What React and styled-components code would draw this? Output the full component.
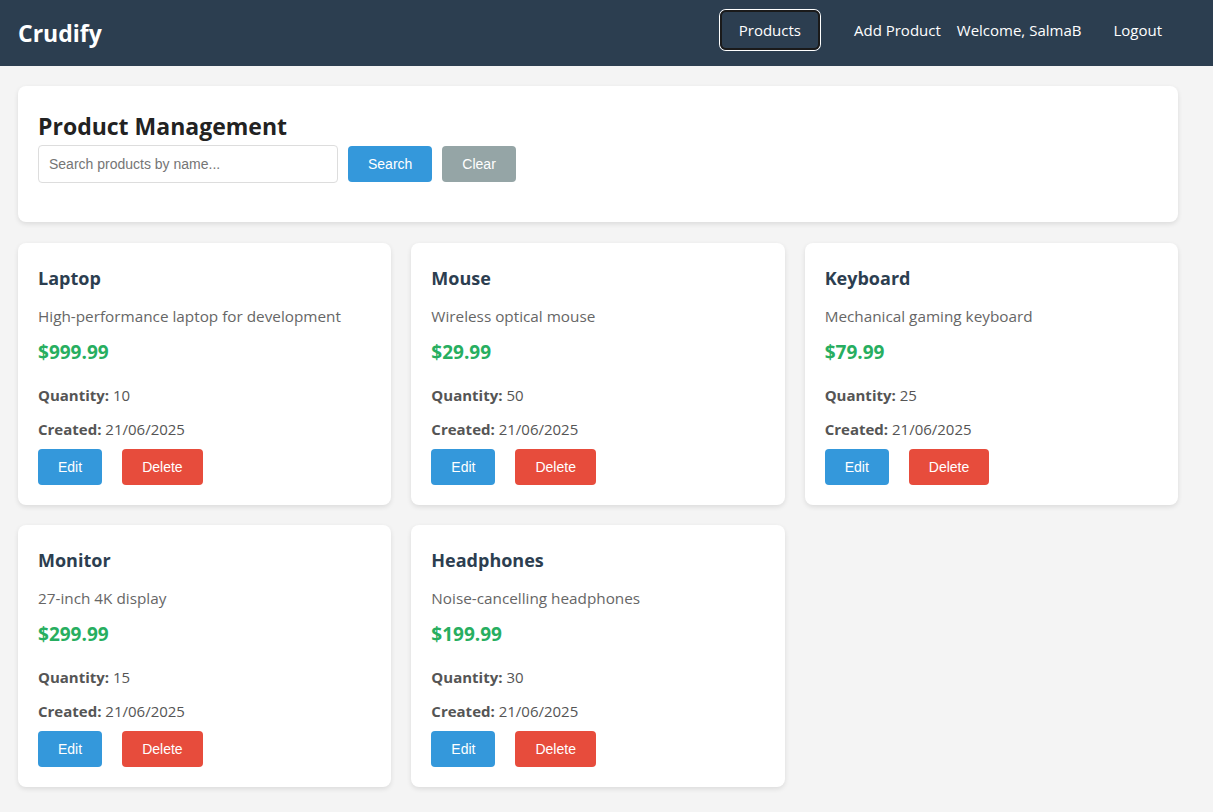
import styled, { createGlobalStyle } from "styled-components";

const GlobalStyle = createGlobalStyle`
  * {
    box-sizing: border-box;
  }
  body {
    margin: 0;
    background: #f4f4f4;
    font-family: "Segoe UI", "Open Sans", "Noto Sans", sans-serif;
    color: #333;
  }
`;

const Navbar = styled.nav`
  height: 66px;
  background: #2c3e50;
  display: flex;
  align-items: center;
  justify-content: space-between;
  padding: 0 35px 0 18px;
`;

const Logo = styled.div`
  color: #fff;
  font-size: 23px;
  font-weight: 700;
`;

const NavLinks = styled.div`
  display: flex;
  align-items: center;
  margin-bottom: 6px;
`;

const NavLink = styled.a`
  color: #fff;
  font-size: 15px;
  text-decoration: none;
  padding: 8px 16px;
  cursor: pointer;
  ${(p) =>
    p.$active &&
    `
    margin-right: 18px;
    padding: 0 17px;
    height: 40px;
    display: flex;
    align-items: center;
    border: 2px solid #1a1a1a;
    border-radius: 6px;
    box-shadow: 0 0 0 1px #fff;
  `}
`;

const Welcome = styled.span`
  color: #fff;
  font-size: 15px;
`;

const LogoutButton = styled.button`
  margin-left: 16px;
  background: transparent;
  border: none;
  color: #fff;
  font-family: inherit;
  font-size: 15px;
  padding: 8px 16px;
  cursor: pointer;
`;

const Container = styled.main`
  width: 1160px;
  margin-left: 18px;
  padding: 20px 0;
  display: flex;
  flex-direction: column;
  gap: 21px;
`;

const Panel = styled.section`
  background: #fff;
  border-radius: 8px;
  box-shadow: 0 2px 5px rgba(0, 0, 0, 0.1);
  padding: 20px 20px 39px;
`;

const PageTitle = styled.h1`
  margin: 0 0 4px;
  padding-top: 5px;
  font-size: 23px;
  line-height: 30px;
  font-weight: 700;
  color: #222;
`;

const SearchRow = styled.form`
  display: flex;
  align-items: center;
  gap: 10px;
`;

const SearchInput = styled.input`
  width: 300px;
  height: 38px;
  padding: 0 10px;
  border: 1px solid #ddd;
  border-radius: 4px;
  font-family: "Liberation Sans", Arial, sans-serif;
  font-size: 14px;
  color: #333;
  &::placeholder {
    color: #757575;
  }
`;

const Button = styled.button`
  height: 36px;
  padding: 0 20px;
  border: none;
  border-radius: 4px;
  background: ${(p) => p.$bg};
  color: #fff;
  font-family: "Liberation Sans", Arial, sans-serif;
  font-size: 14px;
  cursor: pointer;
`;

const Grid = styled.div`
  display: grid;
  grid-template-columns: repeat(3, 1fr);
  gap: 20px;
`;

const Card = styled.article`
  background: #fff;
  border-radius: 8px;
  box-shadow: 0 2px 5px rgba(0, 0, 0, 0.1);
  padding: 20px;
  height: 262px;
  display: flex;
  flex-direction: column;
`;

const CardTitle = styled.h3`
  margin: 0;
  padding-top: 3px;
  font-size: 18px;
  line-height: 24px;
  font-weight: 700;
  color: #2c3e50;
`;

const Description = styled.p`
  margin: 16px 0 0;
  font-size: 15.3px;
  line-height: 20px;
  color: #666;
`;

const Price = styled.div`
  margin-top: 14px;
  font-size: 19px;
  line-height: 25px;
  font-weight: 700;
  color: #27ae60;
`;

const Meta = styled.p`
  margin: ${(p) => p.$top}px 0 0;
  font-size: 15px;
  line-height: 20px;
  color: #555;
  & > strong {
    font-weight: 700;
  }
`;

const Actions = styled.div`
  margin-top: 10px;
  display: flex;
  gap: 20px;
`;

const products = [
  { name: "Laptop", description: "High-performance laptop for development", price: 999.99, quantity: 10 },
  { name: "Mouse", description: "Wireless optical mouse", price: 29.99, quantity: 50 },
  { name: "Keyboard", description: "Mechanical gaming keyboard", price: 79.99, quantity: 25 },
  { name: "Monitor", description: "27-inch 4K display", price: 299.99, quantity: 15 },
  { name: "Headphones", description: "Noise-cancelling headphones", price: 199.99, quantity: 30 },
];

function App() {
  return (
    <>
      <GlobalStyle />
      <Navbar>
        <Logo>Crudify</Logo>
        <NavLinks>
          <NavLink $active>Products</NavLink>
          <NavLink>Add Product</NavLink>
          <Welcome>Welcome, SalmaB</Welcome>
          <LogoutButton>Logout</LogoutButton>
        </NavLinks>
      </Navbar>
      <Container>
        <Panel>
          <PageTitle>Product Management</PageTitle>
          <SearchRow onSubmit={(e) => e.preventDefault()}>
            <SearchInput placeholder="Search products by name..." />
            <Button $bg="#3498db">Search</Button>
            <Button $bg="#95a5a6">Clear</Button>
          </SearchRow>
        </Panel>
        <Grid>
          {products.map((p) => (
            <Card key={p.name}>
              <CardTitle>{p.name}</CardTitle>
              <Description>{p.description}</Description>
              <Price>${p.price.toFixed(2)}</Price>
              <Meta $top={20}>
                <strong>Quantity:</strong> {p.quantity}
              </Meta>
              <Meta $top={14}>
                <strong>Created:</strong> 21/06/2025
              </Meta>
              <Actions>
                <Button $bg="#3498db">Edit</Button>
                <Button $bg="#e74c3c">Delete</Button>
              </Actions>
            </Card>
          ))}
        </Grid>
      </Container>
    </>
  );
}

export default App;
